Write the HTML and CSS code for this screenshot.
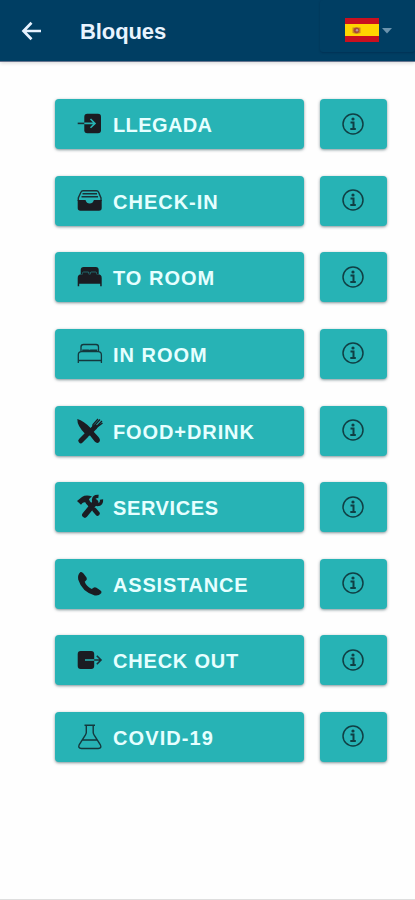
FILE: index.html
```html
<!DOCTYPE html>
<html lang="es">
<head>
<meta charset="utf-8">
<title>Bloques</title>
<link rel="stylesheet" href="styles.css">
</head>
<body>
<svg class="defs" width="0" height="0">
  <symbol id="info" viewBox="0 0 24 24"><circle cx="12" cy="12" r="10" fill="none" stroke="currentColor" stroke-width="1.5"/><circle cx="12" cy="7" r="1.600" fill="currentColor"/><path d="M9.500 10.500h3v6M9.300 17h5.500" fill="none" stroke="currentColor" stroke-width="2"/></symbol>
</svg>
<header class="bar">
  <svg class="back" viewBox="0 0 22 20" fill="none" stroke="#e6f2ff" stroke-width="2.700"><path d="M10.500 1.800 2.500 10l8 8.200M2.500 10H20"/></svg>
  <h1 class="title">Bloques</h1>
  <div class="language">
    <svg class="flag" viewBox="0 0 34 24"><path fill="#c9101f" d="M0 0h34v24H0z"/><path fill="#ffd500" d="M0 6h34v12H0z"/><path fill="#c98a1e" d="M7.500 9.500h8V15l-4 1-4-1z"/><circle cx="11.500" cy="12.300" r="2.800" fill="#a8483a"/><circle cx="12" cy="12.300" r="1.200" fill="#b9979a"/></svg>
    <svg class="caret" viewBox="0 0 10 6"><path fill="#6b93ad" d="M0 0h10L5 5.500z"/></svg>
  </div>
</header>
<main class="blocks">
  <div class="row"><button class="block"><svg class="icon" viewBox="0 0 26 26"><rect x="7.300" y="2.700" width="16.700" height="19.500" rx="3" fill="#1b1c22"/><path d="M.7 12.400h7" stroke="#1b3036" stroke-width="1.600"/><path d="M7.300 12.400h10M13.500 8l4.500 4.400-4.500 4.400" fill="none" stroke="#27b3b5" stroke-width="1.600"/></svg><span class="llegada">LLEGADA</span></button><button class="info"><svg><use href="#info"/></svg></button></div>
  <div class="row"><button class="block"><svg class="icon" viewBox="0 0 26 26"><path d="M1.300 13V10L4 4q.5-1.300 2-1.300h13.500q1.500 0 2 1.300L24 10v3M4.500 8.800h16.500M5.500 5.800h14.500" fill="none" stroke="#1b3036" stroke-width="1.400"/><path fill="#1b1c22" d="M.7 12h7.800q1 3.500 4.200 3.500t4.200-3.500h7.800v8q0 2.700-2.700 2.700H3.400Q.7 22.700.7 20z"/></svg><span>CHECK-IN</span></button><button class="info"><svg><use href="#info"/></svg></button></div>
  <div class="row"><button class="block"><svg class="icon" viewBox="0 0 26 26" fill="#1b1c22"><path d="M3.700 10V6q0-3 3-3h12q3 0 3 3v4h-2V8.500q0-.8-1-.8h-4.500q-1 0-1 .8V10h-1V8.500q0-.8-1-.8H6.500q-1 0-1 .8V10z"/><path d="M5.700 8.300h6v2h-6zM13.500 8.300h6v2h-6zM.7 22.300V14q0-3.700 3.700-3.700H21q3.700 0 3.700 3.700v8.300h-1.500v-2.500h-21v2.500z"/></svg><span>TO ROOM</span></button><button class="info"><svg><use href="#info"/></svg></button></div>
  <div class="row"><button class="block"><svg class="icon" viewBox="0 0 26 26" fill="none" stroke="#14383d" stroke-width="1.300"><path d="M4 11V6q0-2.500 2.500-2.500h12.500q2.500 0 2.500 2.500v5M1.300 22v-8q0-3.300 3.200-3.300h16.700q3.200 0 3.200 3.300v8M1.300 19.500h23"/><path d="M6 10.700V9.200h5.500q1 0 1 1 0-1 1-1h6v1.500" stroke-width="1.600"/></svg><span>IN ROOM</span></button><button class="info"><svg><use href="#info"/></svg></button></div>
  <div class="row"><button class="block"><svg class="icon" viewBox="0 0 26 26"><path fill="#1b1c22" d="M.3 1Q7 3 13.300 9.800L16 13l5.500 6q2.500 3 .7 5-2 2-4.500-.5L13 17.500q-2.300 1-4.300-1Q0 8 .3 1z"/><path d="m18 9-4.500 4.500M9.500 17 3.800 22.800" stroke="#1b1c22" stroke-width="5" stroke-linecap="round"/><path d="m21 1-5 5.500q-1 4 3 3.500L25.500 5M23 1.500 18 7M25 3l-5.500 5.500" fill="none" stroke="#1b1c22" stroke-width="1.300"/></svg><span class="food">FOOD+DRINK</span></button><button class="info"><svg><use href="#info"/></svg></button></div>
  <div class="row"><button class="block"><svg class="icon" viewBox="0 0 26 26"><path fill="#1b1c22" d="m0 7 5-4Q9 .5 15 2.500l-2 1.500q-2 1.500-.3 3L10 9.500Q8 7.500 5.500 9L4 10.800z"/><path d="m11 8.500 2.500 2.700M17.500 16l3 3.500" stroke="#1b1c22" stroke-width="4.500" stroke-linecap="round"/><path d="m18.500 8-10.700 13" stroke="#1b1c22" stroke-width="5.500" stroke-linecap="round"/><path d="M21.500 2.500Q17 2 16.500 6q0 4 4 4.500 4.500 0 4-5" fill="none" stroke="#1b1c22" stroke-width="3.300"/></svg><span class="services">SERVICES</span></button><button class="info"><svg><use href="#info"/></svg></button></div>
  <div class="row"><button class="block"><svg class="icon" viewBox="0 0 26 26"><path fill="#1b1c22" d="M3.500 1Q5 .5 6.500 2.500l3 4q1 1.800-.5 3l-1.300 1.300q1.500 4.500 7 7.300l1.800-1.400q1.300-1 3 .1l4 2.700q1.700 1.300.7 2.700-2.700 3-6.500 2.200Q5 21 1.200 8.500.3 3.500 3.500 1z"/></svg><span class="assistance">ASSISTANCE</span></button><button class="info"><svg><use href="#info"/></svg></button></div>
  <div class="row"><button class="block"><svg class="icon" viewBox="0 0 26 26"><rect x=".7" y="4" width="16.500" height="18" rx="3" fill="#1b1c22"/><path d="M8 13h9.200" stroke="#27b3b5" stroke-width="1.500"/><path d="M17.200 13h6.800M19.800 8.800 24 13l-4.200 4.200" fill="none" stroke="#1b3036" stroke-width="1.600"/></svg><span class="assistance">CHECK OUT</span></button><button class="info"><svg><use href="#info"/></svg></button></div>
  <div class="row"><button class="block"><svg class="icon" viewBox="0 0 26 26" fill="none" stroke="#14383d" stroke-width="1.400"><path d="M7.500 1.300h10.500M9.300 1.300v7.200q0 1-1 2.700L2.300 20.500Q.5 24.300 4.500 24.500h16.700q4-.2 2-4L17.200 11.200q-1-1.700-1-2.700V1.300M5.300 16h15"/></svg><span class="covid">COVID-19</span></button><button class="info"><svg><use href="#info"/></svg></button></div>
</main>
</body>
</html>
```
FILE: styles.css
```css
* { box-sizing: border-box; }
body {
  margin: 0;
  height: 900px;
  display: flex;
  flex-direction: column;
  background: #fefefe;
  border-bottom: 1px solid #dedede;
  font-family: "Liberation Sans", Arial, sans-serif;
}
.defs { position: absolute; }
.bar {
  display: flex;
  align-items: flex-start;
  flex: none;
  height: 62px;
  padding-left: 21px;
  background: #003e63;
  border-bottom: 1px solid #66758f;
  box-shadow: 0 1px 4px rgba(0, 0, 0, .16);
}
.back { width: 22px; height: 20px; margin-top: 20.500px; }
.title {
  margin: 19px 0 0 37px;
  color: #e9f4ff;
  font-size: 22px;
  line-height: 26px;
  letter-spacing: -.1px;
}
.language {
  display: flex;
  align-items: flex-start;
  gap: 3px;
  width: 95px;
  height: 52px;
  margin-left: auto;
  padding: 18px 0 0 25px;
  border-radius: 3px;
  box-shadow: 0 1px 2px rgba(0, 20, 50, .3);
}
.flag { width: 34px; height: 24px; }
.caret { width: 10px; height: 6px; margin-top: 10px; }
.blocks {
  display: flex;
  flex-direction: column;
  gap: 26.600px;
  padding: 37.200px 28px 0 55px;
}
.row { display: flex; justify-content: space-between; height: 50px; }
button {
  display: flex;
  border: 0;
  border-radius: 4px;
  background: #27b3b5;
  box-shadow: 0 1px 3px rgba(0, 40, 50, .5);
  font-family: inherit;
}
.block {
  align-items: flex-start;
  width: 249px;
  padding: 12px 0 0 22px;
  gap: 10px;
  color: #e6ffff;
  font-size: 20px;
  font-weight: bold;
  line-height: 29px;
  letter-spacing: 1px;
}
.icon { width: 26px; height: 26px; overflow: visible; }
.llegada { letter-spacing: .4px; }
.food { letter-spacing: .9px; }
.services { letter-spacing: .6px; }
.assistance { letter-spacing: .8px; }
.covid { letter-spacing: 1.100px; }
.info {
  justify-content: center;
  width: 67px;
  padding: 12.400px 2px 0 0;
  color: #103f44;
}
.info svg { width: 24px; height: 24px; }
```
